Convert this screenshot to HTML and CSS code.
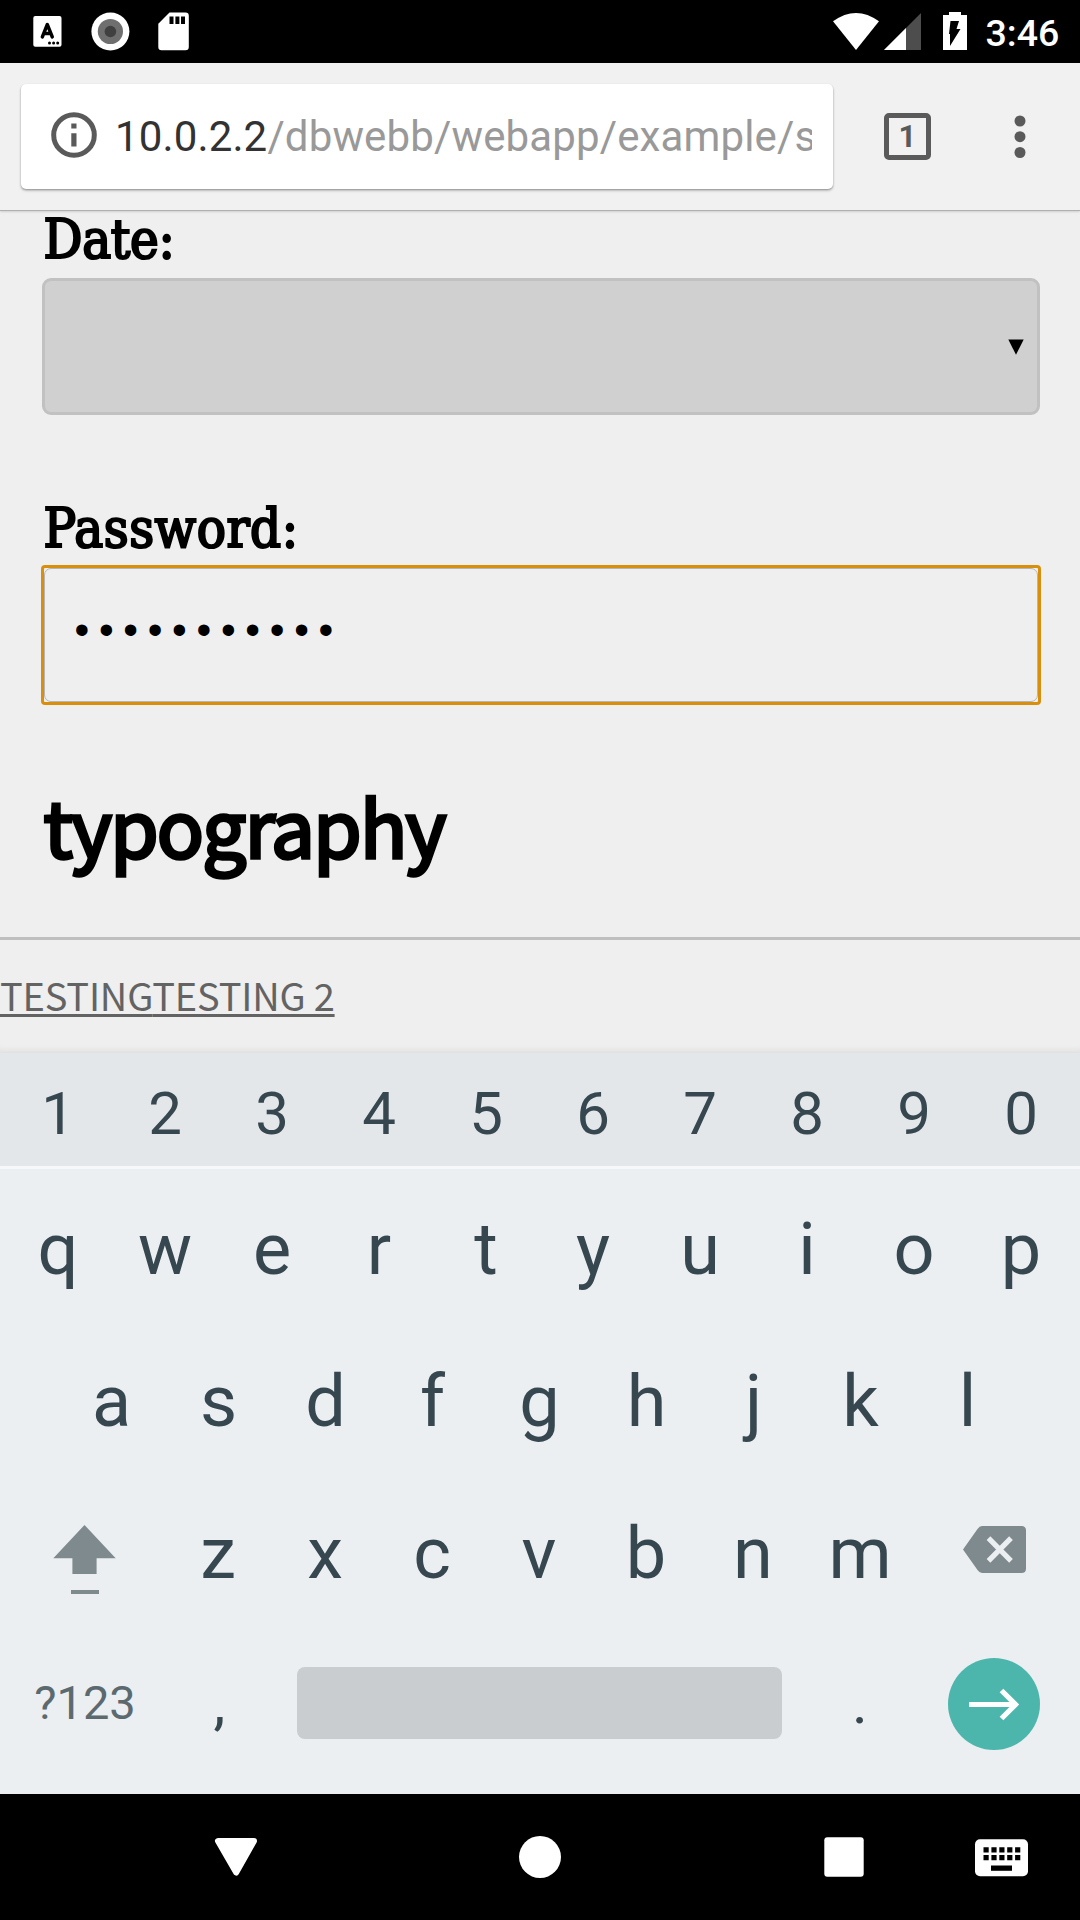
FILE: index.html
```html
<!DOCTYPE html>
<html lang="en">
<head>
<meta charset="utf-8">
<title>typography</title>
<link rel="stylesheet" href="styles.css">
</head>
<body>
<div class="screen">
  <header class="status">
    <svg class="status-left" width="200" height="63" viewBox="0 0 200 63">
      <rect x="33.3" y="16" width="28.2" height="30.8" rx="2" fill="#fff"/>
      <path d="M42.3 37 L47.3 24.5 L52.3 37 M44 33.5 H50.5" fill="none" stroke="#000" stroke-width="3.4" stroke-linecap="round" stroke-linejoin="round"/>
      <circle cx="49.5" cy="43" r="1.5"/><circle cx="53.6" cy="43" r="1.5"/><circle cx="57.7" cy="43" r="1.5"/>
      <circle cx="110.4" cy="31.5" r="19" fill="#fff"/>
      <circle cx="110.4" cy="31.5" r="12.6" fill="#6f6f6f"/>
      <circle cx="110.4" cy="31.5" r="5.8" fill="#404040"/>
      <path d="M169.5 12.5 H185.5 Q188.8 12.5 188.8 15.8 V47 Q188.8 50.3 185.5 50.3 H161.6 Q158.3 50.3 158.3 47 V23.8 Z" fill="#fff"/>
      <path d="M169.5 16.5h4v7.5h-4z M175.4 16.5h4v7.5h-4z M181 16.5h4v7.5h-4z"/>
    </svg>
    <div class="status-right">
      <svg width="140" height="63" viewBox="830 0 140 63">
        <path d="M833 21.3 Q856 4.5 879 21.3 L856 50 Z" fill="#fff"/>
        <path d="M921 13 V50 H884 Z" fill="#4d4d4d"/>
        <path d="M906 28 V50 H884 Z" fill="#fff"/>
        <path d="M949 12 H961 V15 H967 V50 H943 V15 H949 Z" fill="#fff"/>
        <path d="M950.5 21 H959 L956.5 29 H960.5 L950 46 V34 H949 Z"/>
      </svg>
      <span class="clock">3:46</span>
    </div>
  </header>

  <div class="toolbar">
    <div class="omnibox">
      <svg class="info" width="46" height="46" viewBox="0 0 46 46">
        <circle cx="23" cy="23" r="20.3" fill="none" stroke="#5a5a5a" stroke-width="5"/>
        <path d="M20.3 11.5h5.2v5h-5.2z M20.3 21.3h5.2v13.2h-5.2z" fill="#5a5a5a"/>
      </svg>
      <div class="url"><span class="host">10.0.2.2</span>/dbwebb/webapp/example/s</div>
    </div>
    <div class="tabs">1</div>
    <svg class="dots" width="12" height="46" viewBox="0 0 12 46" fill="#5a5a5a">
      <circle cx="6" cy="7" r="5.5"/><circle cx="6" cy="22.700" r="5.5"/><circle cx="6" cy="38.500" r="5.5"/>
    </svg>
  </div>

  <main class="page">
    <div class="label date-label">Date:</div>
    <div class="select">
      <svg width="16" height="16" viewBox="0 0 16 16"><path d="M.3 .5H15.7L8 15.7Z"/></svg>
    </div>
    <div class="label password-label">Password:</div>
    <div class="focus"><div class="password">•••••••••••</div></div>
    <h1 class="title">typography</h1>
    <div class="links"><a class="link">TESTING</a><a class="link">TESTING 2</a></div>
  </main>

  <section class="keyboard">
    <div class="row numbers"><span>1</span><span>2</span><span>3</span><span>4</span><span>5</span><span>6</span><span>7</span><span>8</span><span>9</span><span>0</span></div>
    <div class="row letters"><span>q</span><span>w</span><span>e</span><span>r</span><span>t</span><span>y</span><span>u</span><span>i</span><span>o</span><span>p</span></div>
    <div class="row letters home"><span>a</span><span>s</span><span>d</span><span>f</span><span>g</span><span>h</span><span>j</span><span>k</span><span>l</span></div>
    <div class="row letters lower">
      <svg width="160" height="152" viewBox="5 1476 160 152" fill="#7f8a8f">
        <path d="M84.5 1525 L115.7 1558.2 H96.6 V1574 H72.4 V1558.2 H53.3 Z M71 1590h28v4h-28z"/>
      </svg>
      <span>z</span><span>x</span><span>c</span><span>v</span><span>b</span><span>n</span><span>m</span>
      <svg width="162" height="152" viewBox="914 1476 162 152">
        <path d="M982 1526 H1021.500 Q1026 1526 1026 1530.500 V1568.500 Q1026 1573 1021.500 1573 H982 Q979.500 1573 977.500 1570 L963 1549.500 L977.500 1529 Q979.500 1526 982 1526 Z" fill="#7f8a8f"/>
        <path d="M988.500 1538.200 L1011 1560.800 M1011 1538.200 L988.500 1560.800" stroke="#ebeff2" stroke-width="5.200"/>
      </svg>
    </div>
    <div class="row bottom">
      <span class="symbols">?123</span>
      <span class="comma">,</span>
      <div class="space"></div>
      <span>.</span>
      <svg class="enter" width="92" height="92" viewBox="948 1658 92 92">
        <circle cx="994" cy="1704" r="46" fill="#4db6ac"/>
        <path d="M969 1704.500 H1015 M1001.500 1690.500 L1015.500 1704.500 L1001.500 1718.500" fill="none" stroke="#fff" stroke-width="5.200"/>
      </svg>
    </div>
  </section>

  <nav class="nav">
    <svg width="1080" height="126" viewBox="0 1794 1080 126" fill="#fff">
      <path d="M218 1841 H254 L236.200 1872.500 Z" stroke="#fff" stroke-width="6" stroke-linejoin="round"/>
      <circle cx="540" cy="1857" r="21"/>
      <rect x="824.300" y="1837.200" width="39.400" height="39.600" rx="3"/>
      <rect x="975" y="1839.200" width="53" height="37" rx="5"/>
      <path d="M983.500 1849.800H1020.500M983.500 1857.700H1020.500" stroke="#000" stroke-width="5.200" stroke-dasharray="5.200 2.700"/>
      <path d="M991 1865.500h21v5.300h-21z" fill="#000"/>
    </svg>
  </nav>
</div>
</body>
</html>
```
FILE: styles.css
```css
* { box-sizing: border-box; }
body { margin: 0; font-family: Roboto, sans-serif; background: #efefef; }
svg { display: block; flex: none; }
.screen { width: 1080px; height: 1920px; overflow: hidden; display: flex; flex-direction: column; }

.status { height: 63px; background: #000; display: flex; justify-content: space-between; flex: none; }
.status-right { display: flex; width: 250px; }
.clock { color: #fff; font-size: 37.5px; font-weight: 500; line-height: 67px; margin-left: 15.5px; }

.toolbar { height: 147px; flex: none; background: #f1f1f1; display: flex; align-items: flex-start; padding: 21px 0 0 21px; position: relative; box-shadow: 0 1px 0 #b0b0b0, 0 2px 2px #cfcfcf; }
.omnibox { width: 812px; height: 105px; background: #fff; border-radius: 5px; display: flex; align-items: center; padding: 0 21px 0 29.5px; box-shadow: 0 1px 2px rgba(0,0,0,.3), 0 2px 3px rgba(0,0,0,.14); }
.info { margin-top: -4px; }
.url { margin-left: 18.5px; flex: 1; overflow: hidden; white-space: nowrap; font-size: 42px; line-height: 60px; letter-spacing: .14px; color: #999; }
.host { color: #323232; }
.tabs { margin: 29px 0 0 51px; width: 47px; height: 47px; border: 5px solid #5a5a5a; border-radius: 5px; text-align: center; font-size: 31px; font-weight: 700; line-height: 37px; color: #5a5a5a; }
.dots { margin: 30px 0 0 82.5px; }

.page { height: 843px; flex: none; box-shadow: inset 0 -8px 6px -6px #dcdcdc; }
.label { font-family: "DejaVu Serif Condensed", "DejaVu Serif", serif; font-stretch: condensed; font-size: 54px; line-height: 60px; font-weight: 400; -webkit-text-stroke: 2.2px #000; padding-left: 43.5px; color: #000; }
.date-label { letter-spacing: -.3px; }
.select { margin: 8px 40px 0 42px; height: 137px; background: #d0d0d0; border: 3px solid #c1c1c1; border-radius: 9px; display: flex; align-items: center; justify-content: flex-end; padding-right: 13px; }
.password-label { margin-top: 84px; letter-spacing: .5px; }
.focus { margin: 6px 39px 0 41px; height: 140px; border: 3px solid #d98f0c; border-radius: 4px; }
.password { height: 134px; border: 1px solid #b5b5b5; border-radius: 7px; padding-left: 29.5px; font-family: "Liberation Sans", sans-serif; font-size: 42px; line-height: 122px; letter-spacing: 9.7px; }
.title { font-family: "Noto Sans CJK JP", sans-serif; font-size: 78px; line-height: 100px; font-weight: 400; -webkit-text-stroke: 3.4px #000; margin: 69px 0 0; padding-left: 43.5px; letter-spacing: -1.7px; color: #000; }
.links { margin-top: 63px; border-top: 3px solid #bfbfbf; padding-top: 30px; font-family: "Noto Sans CJK JP", sans-serif; font-size: 38px; line-height: 50px; letter-spacing: -.2px; color: #636363; }
.link { text-decoration: underline; text-decoration-thickness: 3px; text-underline-offset: 3px; text-decoration-skip-ink: none; }

.keyboard { height: 741px; flex: none; background: #ebeff2; color: #37474f; }
.row { display: flex; padding-left: 4.5px; }
.row span { width: 107px; text-align: center; flex: none; }
.numbers { height: 116px; background: #e3e7ea; border-bottom: 3px solid #f6f8fa; font-size: 60px; line-height: 121px; margin-bottom: 3px; }
.letters { height: 152px; font-size: 72px; line-height: 156px; }
.home { padding-left: 58px; }
.bottom { height: 150px; align-items: center; font-size: 60px; line-height: 150px; }
.bottom .symbols { width: 160px; font-size: 47px; padding-left: 1px; color: #5c6a70; }
.bottom .comma { padding-left: 3px; }
.space { width: 485px; height: 72px; margin: 0 25px; border-radius: 8px; background: #c9cdd0; }
.enter { margin: 2px 0 0 34.5px; }
.nav { height: 126px; flex: none; background: #000; }
```
